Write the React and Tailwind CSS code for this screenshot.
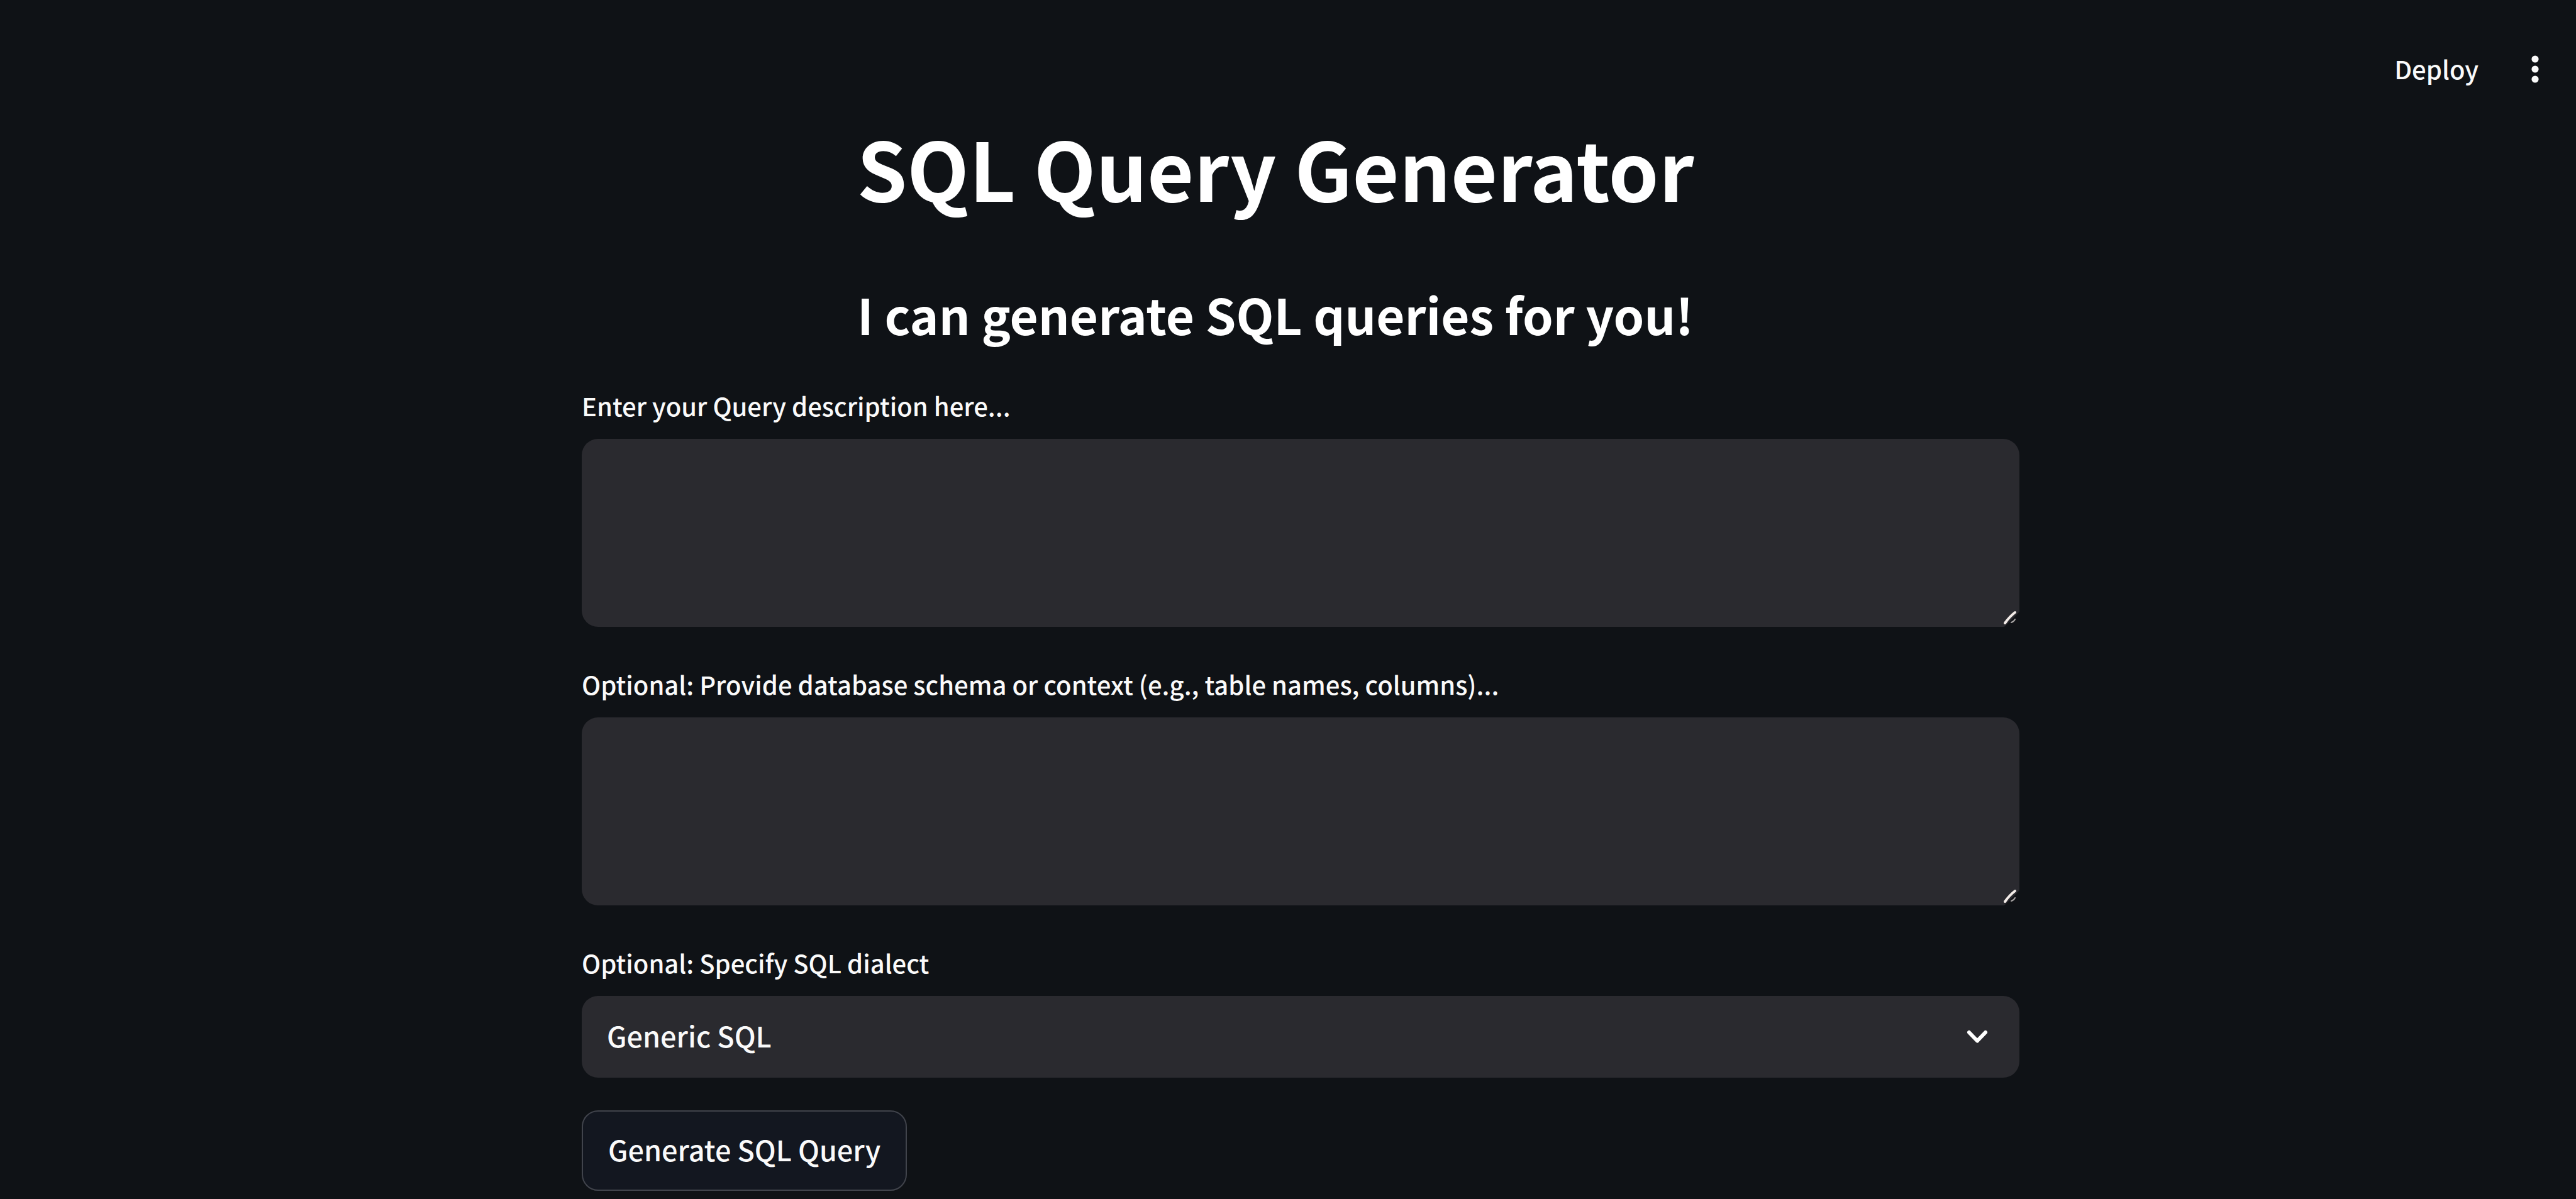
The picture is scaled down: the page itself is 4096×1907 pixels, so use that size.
import { useState } from "react";

const DIALECTS = ["Generic SQL", "MySQL", "PostgreSQL", "SQLite", "SQL Server", "Oracle"];

function QueryArea({ id, label, value, onChange }) {
  return (
    <div className="flex flex-col">
      <label htmlFor={id} className="text-[40px] leading-[62px] font-medium">
        {label}
      </label>
      <div className="relative mt-[22px]">
        <textarea
          id={id}
          value={value}
          onChange={(event) => onChange(event.target.value)}
          className="block h-[299px] w-full resize-none rounded-[26px] bg-[#2a2a2f] px-10 py-8 text-[45px] leading-[64px] outline-none"
        />
        <svg
          aria-hidden="true"
          viewBox="0 0 28 28"
          className="pointer-events-none absolute right-0 bottom-0 h-7 w-7"
        >
          <path d="M4 28 L28 4 V28 Z" fill="#101216" />
          <path d="M5 22 Q12 12 21 5" fill="none" stroke="#f3ece8" strokeWidth="4" strokeLinecap="round" />
          <path d="M15 21 Q19 20 21 16" fill="none" stroke="#a9a5a5" strokeWidth="2" strokeLinecap="round" />
        </svg>
      </div>
    </div>
  );
}

export default function App() {
  const [description, setDescription] = useState("");
  const [schema, setSchema] = useState("");
  const [dialect, setDialect] = useState(DIALECTS[0]);

  return (
    <div className="min-h-screen bg-[#0f1216] font-['Noto_Sans_CJK_SC','Noto_Sans',sans-serif] text-[#fafafa]">
      <header className="flex items-start justify-end gap-[66px] pt-20 pr-[41px]">
        <button type="button" className="text-[40px] leading-[58px] font-medium">
          Deploy
        </button>
        <button type="button" aria-label="Main menu" className="flex h-[60px] w-12 items-center justify-center">
          <svg aria-hidden="true" viewBox="0 0 12 44" className="h-11 w-3" fill="currentColor">
            <circle cx="6" cy="6" r="5.6" />
            <circle cx="6" cy="22" r="5.6" />
            <circle cx="6" cy="38" r="5.6" />
          </svg>
        </button>
      </header>

      <main className="pl-10">
        <div className="mx-auto flex max-w-[2286px] flex-col">
          <h1 className="mt-10 pr-20 text-center text-[128px] leading-[172px] font-bold text-white">
            SQL Query Generator
          </h1>
          <h2 className="mt-[92px] pr-20 text-center text-[78px] leading-[110px] font-semibold text-white">
            I can generate SQL queries for you!
          </h2>

          <form className="mt-[60px] flex flex-col" onSubmit={(event) => event.preventDefault()}>
            <div className="flex flex-col gap-[60px]">
              <QueryArea
                id="description"
                label="Enter your Query description here..."
                value={description}
                onChange={setDescription}
              />
              <QueryArea
                id="schema"
                label="Optional: Provide database schema or context (e.g., table names, columns)..."
                value={schema}
                onChange={setSchema}
              />
              <div className="flex flex-col">
                <label htmlFor="dialect" className="text-[40px] leading-[62px] font-medium">
                  Optional: Specify SQL dialect
                </label>
                <div className="relative mt-[22px]">
                  <select
                    id="dialect"
                    value={dialect}
                    onChange={(event) => setDialect(event.target.value)}
                    className="block h-[130px] w-full appearance-none rounded-[26px] bg-[#2a2a2f] px-10 pb-1 text-[45px] font-medium outline-none"
                  >
                    {DIALECTS.map((name) => (
                      <option key={name}>{name}</option>
                    ))}
                  </select>
                  <svg
                    aria-hidden="true"
                    viewBox="0 0 34 22"
                    className="pointer-events-none absolute top-[54px] right-[50px] h-[22px] w-[34px]"
                    fill="none"
                    stroke="#ffffff"
                    strokeWidth="6"
                    strokeLinecap="round"
                    strokeLinejoin="round"
                  >
                    <path d="M4 4 L17 17.500 L30 4" />
                  </svg>
                </div>
              </div>
            </div>
            <button
              type="submit"
              className="mt-[52px] h-[128px] self-start rounded-[26px] border-2 border-[#41444c] bg-[#131720] px-10 pb-1 text-[45px] font-medium"
            >
              Generate SQL Query
            </button>
          </form>
        </div>
      </main>
    </div>
  );
}
